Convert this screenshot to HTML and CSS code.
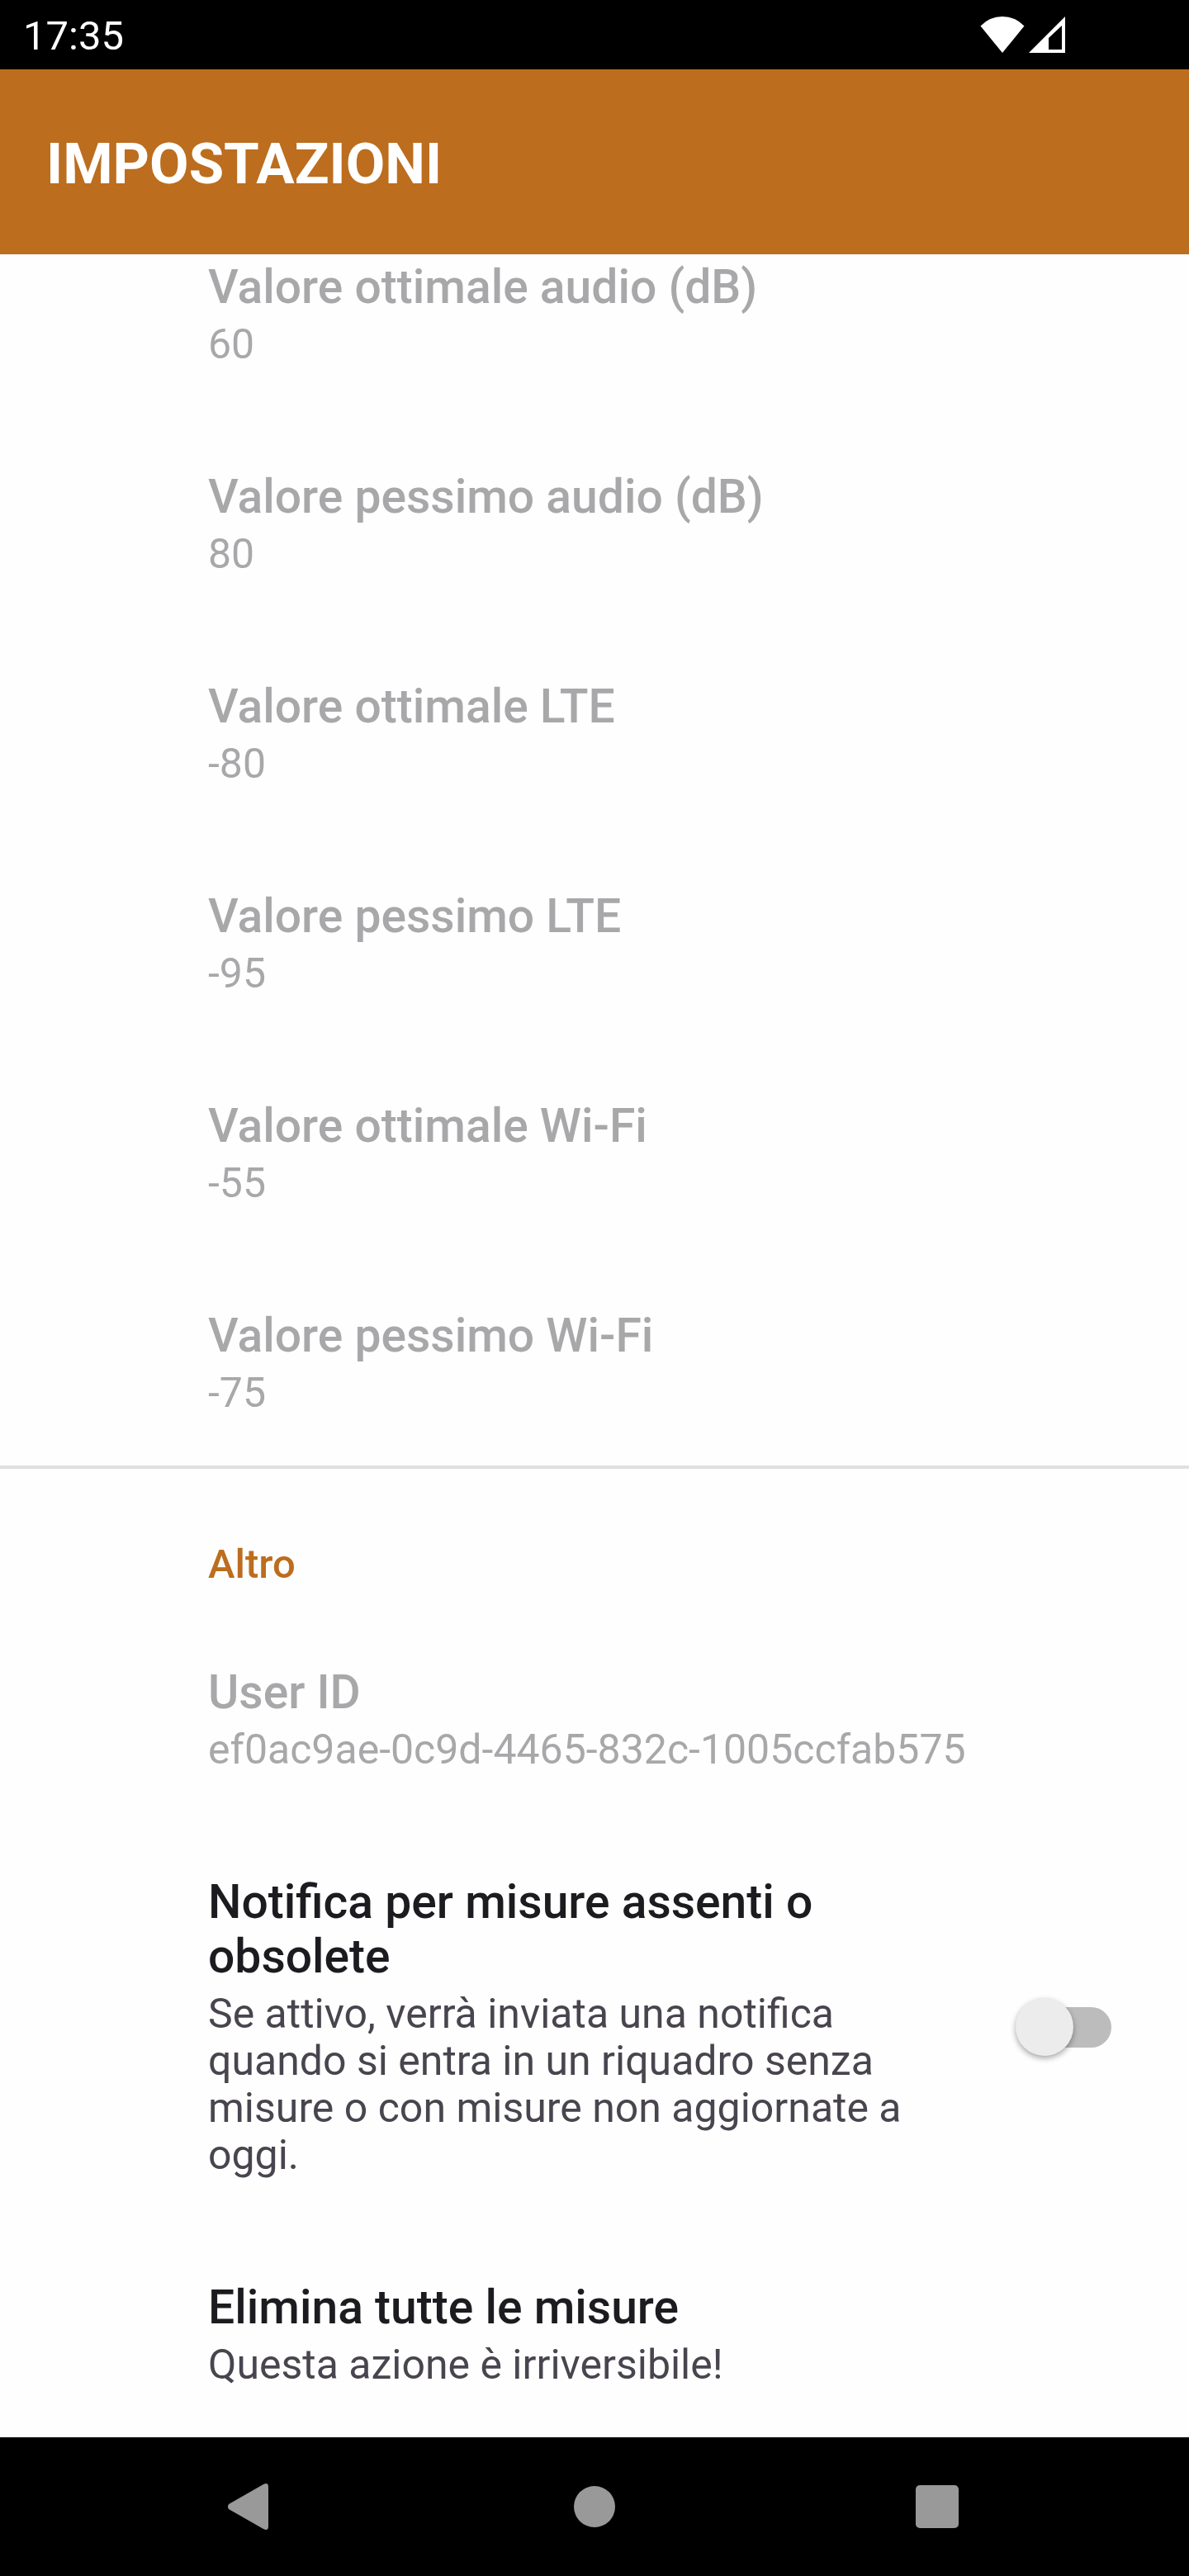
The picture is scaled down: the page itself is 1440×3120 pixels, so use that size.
FILE: index.html
```html
<!DOCTYPE html>
<html lang="it">
<head>
<meta charset="utf-8">
<meta name="viewport" content="width=device-width, initial-scale=1">
<title>Impostazioni</title>
<link rel="stylesheet" href="styles.css">
</head>
<body>
<div class="status-bar">
  <time class="clock">17:35</time>
  <div class="status-icons">
    <svg class="status-icon" width="54" height="46" viewBox="0 0 54 46" aria-hidden="true"><path fill="#fff" d="M27 45 .5 12.500Q11.500 1 27 1T53.500 12.500Z"/></svg>
    <svg class="status-icon" width="46" height="46" viewBox="0 0 46 46" aria-hidden="true"><path fill="#fff" fill-rule="evenodd" d="M1 45 45 1V45ZM25 41H41V12L25 27Z"/></svg>
  </div>
</div>
<header class="app-bar">
  <h1 class="app-title">IMPOSTAZIONI</h1>
</header>
<main class="settings">
  <div class="scroll-content">
    <section class="group">
      <div class="item disabled"><div class="item-text"><h3 class="item-title">Valore ottimale audio (dB)</h3><p class="item-summary">60</p></div></div>
      <div class="item disabled"><div class="item-text"><h3 class="item-title">Valore pessimo audio (dB)</h3><p class="item-summary">80</p></div></div>
      <div class="item disabled"><div class="item-text"><h3 class="item-title">Valore ottimale LTE</h3><p class="item-summary">-80</p></div></div>
      <div class="item disabled"><div class="item-text"><h3 class="item-title">Valore pessimo LTE</h3><p class="item-summary">-95</p></div></div>
      <div class="item disabled"><div class="item-text"><h3 class="item-title">Valore ottimale Wi-Fi</h3><p class="item-summary">-55</p></div></div>
      <div class="item disabled"><div class="item-text"><h3 class="item-title">Valore pessimo Wi-Fi</h3><p class="item-summary">-75</p></div></div>
    </section>
    <section class="group">
      <h2 class="group-title">Altro</h2>
      <div class="item disabled"><div class="item-text"><h3 class="item-title">User ID</h3><p class="item-summary">ef0ac9ae-0c9d-4465-832c-1005ccfab575</p></div></div>
      <label class="item" for="notify">
        <span class="item-text"><span class="item-title">Notifica per misure assenti o obsolete</span><span class="item-summary">Se attivo, verrà inviata una notifica quando si entra in un riquadro senza misure o con misure non aggiornate a oggi.</span></span>
        <input class="switch" type="checkbox" role="switch" id="notify">
      </label>
      <button class="item" type="button">
        <span class="item-text"><span class="item-title">Elimina tutte le misure</span><span class="item-summary">Questa azione è irriversibile!</span></span>
      </button>
    </section>
  </div>
</main>
<nav class="nav-bar" aria-label="Navigazione di sistema">
  <button class="nav-button" type="button" aria-label="Indietro"><svg width="70" height="70" viewBox="0 0 70 70" aria-hidden="true"><path fill="#999" d="M7 32 49 8Q55 5 55 11V59Q55 65 49 62L7 38Q5 35 7 32Z"/></svg></button>
  <button class="nav-button" type="button" aria-label="Home"><svg width="70" height="70" viewBox="0 0 70 70" aria-hidden="true"><circle cx="35" cy="35" r="25" fill="#999"/></svg></button>
  <button class="nav-button" type="button" aria-label="Recenti"><svg width="70" height="70" viewBox="0 0 70 70" aria-hidden="true"><rect x="9" y="9" width="52" height="52" rx="5" fill="#999"/></svg></button>
</nav>
</body>
</html>
```
FILE: styles.css
```css
:root {
  --accent: #bc6d1e;
  --surface: #fefefe;
  --text: #1c1b1f;
  --text-muted: #49454f;
  --text-disabled: #a8a8aa;
}

* {
  box-sizing: border-box;
}

body {
  display: flex;
  flex-direction: column;
  min-height: 100vh;
  margin: 0;
  background: var(--surface);
  color: var(--text);
  font-family: Roboto, "Noto Sans", sans-serif;
}

h1, h2, h3, p {
  margin: 0;
}

button {
  border: 0;
  background: none;
  font: inherit;
  color: inherit;
  text-align: left;
}

.status-bar {
  display: flex;
  justify-content: space-between;
  align-items: center;
  height: 84px;
  padding: 0 149px 0 28px;
  background: #000;
  color: #fff;
}

.clock {
  padding-top: 3px;
  font-size: 49px;
  line-height: 57px;
}

.status-icons {
  display: flex;
  gap: 4px;
}

.status-icon {
  display: block;
}

.app-bar {
  display: flex;
  align-items: center;
  height: 224px;
  padding: 6px 56px 0;
  background: var(--accent);
  color: #fff;
}

.app-title {
  font-size: 69px;
  line-height: 82px;
  font-weight: 700;
}

.settings {
  flex: 1;
  overflow: hidden;
}

/* The list is scrolled, so its first row starts under the app bar. */
.scroll-content {
  margin-top: -57px;
}

.group + .group {
  border-top: 4px solid #e0e0e0;
}

.group-title {
  padding: 87px 56px 30px 252px;
  color: var(--accent);
  font-size: 49px;
  line-height: 57px;
  font-weight: 500;
}

.item {
  display: flex;
  align-items: center;
  gap: 80px;
  width: 100%;
  padding: 64px 90px 59px 252px;
}

.item-text {
  display: flex;
  flex: 1;
  flex-direction: column;
  gap: 8px;
}

.item-title {
  font-size: 57px;
  line-height: 66px;
  font-weight: 500;
}

.item-summary {
  color: var(--text-muted);
  font-size: 50px;
  line-height: 57px;
}

.disabled .item-title,
.disabled .item-summary {
  color: var(--text-disabled);
}

.switch {
  position: relative;
  display: flex;
  flex: none;
  align-items: center;
  width: 120px;
  height: 70px;
  margin: 0;
  appearance: none;
}

.switch::before {
  content: "";
  flex: 1;
  height: 49px;
  margin: 0 4px;
  border-radius: 25px;
  background: #bcbcbc;
}

.switch::after {
  content: "";
  position: absolute;
  left: 0;
  width: 70px;
  height: 70px;
  border-radius: 50%;
  background: #ececec;
  box-shadow: 0 3px 7px rgb(0 0 0 / 35%);
}

.switch:checked::after {
  right: 0;
  left: auto;
  background: var(--accent);
}

.nav-bar {
  display: grid;
  grid-template-columns: repeat(3, 1fr);
  height: 168px;
  padding: 0 97px;
  background: #000;
}

.nav-button {
  display: flex;
  align-items: center;
  justify-content: center;
  padding: 0;
}
```
